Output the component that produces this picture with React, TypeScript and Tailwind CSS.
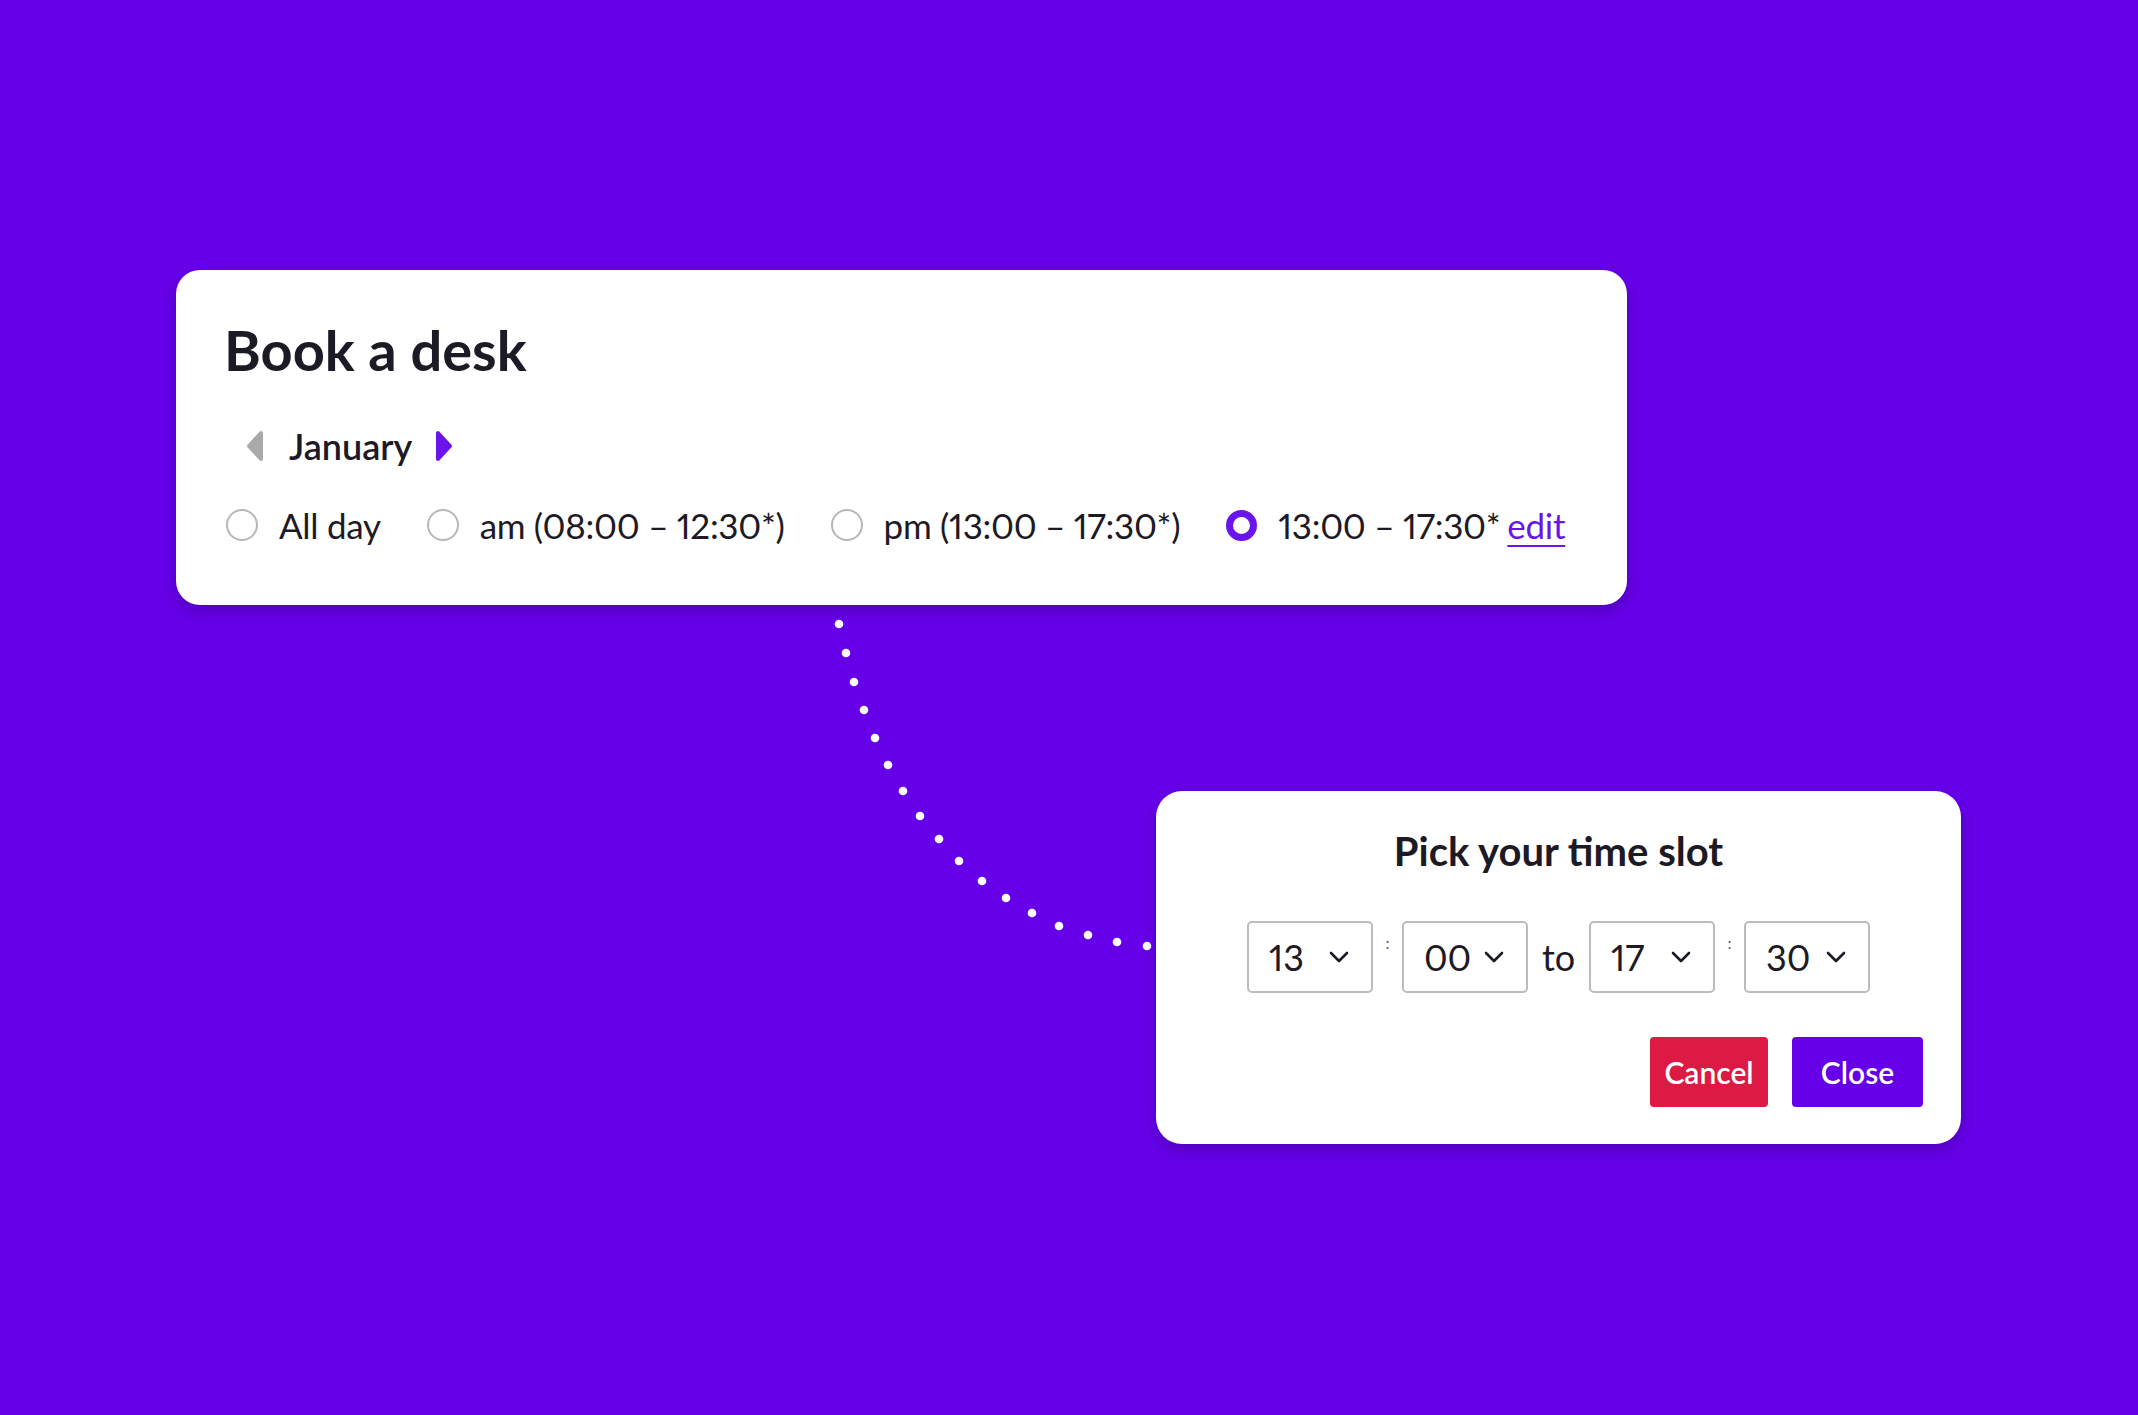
import React from "react";

const dots = [
  [839, 624], [846, 653], [854, 682], [864, 710], [875, 738], [888, 765],
  [903, 791], [920, 816], [939, 839], [959, 861], [982, 881], [1006, 898],
  [1032, 913], [1059, 926], [1088, 935], [1117, 942], [1147, 946],
];

const slots = [
  { label: "All day" },
  { label: "am (08:00 – 12:30*)" },
  { label: "pm (13:00 – 17:30*)" },
  { label: "13:00 – 17:30*", selected: true },
];

function Arrow({ dir, color }: { dir: "left" | "right"; color: string }) {
  return (
    <svg width="18" height="32" viewBox="0 0 18 32" className="shrink-0">
      <path
        d={dir === "left" ? "M15 3 L15 29 L3 16 Z" : "M3 3 L3 29 L15 16 Z"}
        fill={color}
        stroke={color}
        strokeWidth="4"
        strokeLinejoin="round"
      />
    </svg>
  );
}

function Radio({ selected }: { selected?: boolean }) {
  if (selected) {
    return <span className="block w-[31px] h-[31px] rounded-full border-[7px] border-[#6a14ec] shrink-0" />;
  }
  return <span className="block w-[32px] h-[32px] rounded-full border-2 border-[#b7b7b7] shrink-0" />;
}

function TimeSelect({ value }: { value: string }) {
  return (
    <div className="w-[126px] h-[72px] border-2 border-[#bcbcbc] rounded-[5px] flex items-center justify-between pl-[20px] pr-[22px]">
      <span className="text-[36px] leading-none text-[#1d1a26] proportional-nums">{value}</span>
      <svg width="20" height="12" viewBox="0 0 20 12" fill="none">
        <path d="M2 2 L10 10 L18 2" stroke="#1d1a26" strokeWidth="2.6" strokeLinecap="round" strokeLinejoin="round" />
      </svg>
    </div>
  );
}

function Colon() {
  return <span className="self-start mt-[14px] text-[16px] leading-none text-[#555] w-[5px] text-center">:</span>;
}

export default function App() {
  return (
    <div
      className="relative w-full min-h-screen h-[1415px] bg-[#6600e8] overflow-hidden pt-[270px]"
      style={{ fontFamily: "Lato, 'Noto Sans', sans-serif" }}
    >
      {/* dotted connector */}
      <svg className="absolute inset-0 pointer-events-none" width="2138" height="1415" viewBox="0 0 2138 1415">
        {dots.map(([x, y], i) => (
          <circle key={i} cx={x} cy={y} r="4.3" fill="#fff" />
        ))}
      </svg>

      {/* Book a desk */}
      <section className="relative ml-[176px] w-[1451px] h-[335px] bg-white rounded-[24px] shadow-[0_6px_14px_rgba(40,0,110,0.35)] pt-[52px] pl-[50px]">
        <h1 className="text-[56px] leading-[56px] font-bold text-[#1d1a26] -ml-[2px]">Book a desk</h1>
        <div className="mt-[50px] flex items-center h-[36px] pl-[20px]">
          <Arrow dir="left" color="#a9a9a9" />
          <span className="ml-[25px] mr-[23px] text-[36px] leading-[36px] font-semibold text-[#1d1a26]">January</span>
          <Arrow dir="right" color="#6a14ec" />
        </div>
        <div className="mt-[43px] flex items-center gap-[46px] h-[36px]">
          {slots.map((s, i) => (
            <div key={i} className="flex items-center gap-[21px]">
              <Radio selected={s.selected} />
              <span className="text-[35px] leading-[36px] text-[#1d1a26] whitespace-nowrap proportional-nums tracking-[-0.3px]">
                {s.label}
                {s.selected && <a className="ml-[7px] text-[#6a14ec] underline underline-offset-[6px] decoration-2">edit</a>}
              </span>
            </div>
          ))}
        </div>
      </section>

      {/* Pick your time slot */}
      <section className="relative mt-[186px] ml-[1156px] w-[805px] h-[353px] bg-white rounded-[26px] shadow-[0_6px_14px_rgba(40,0,110,0.35)] pt-[40px] px-[38px]">
        <h2 className="text-[40px] leading-[40px] font-bold text-[#1d1a26] text-center">Pick your time slot</h2>
        <div className="mt-[50px] flex items-center justify-center gap-[12px]">
          <TimeSelect value="13" />
          <Colon />
          <TimeSelect value="00" />
          <span className="mx-[2px] text-[36px] leading-none text-[#1d1a26]">to</span>
          <TimeSelect value="17" />
          <Colon />
          <TimeSelect value="30" />
        </div>
        <div className="mt-[44px] flex justify-end gap-[24px]">
          <button className="w-[118px] h-[70px] rounded-[4px] bg-[#dc1a44] text-white text-[30px] font-semibold">Cancel</button>
          <button className="w-[131px] h-[70px] rounded-[4px] bg-[#6600e8] text-white text-[30px] font-semibold">Close</button>
        </div>
      </section>
    </div>
  );
}
